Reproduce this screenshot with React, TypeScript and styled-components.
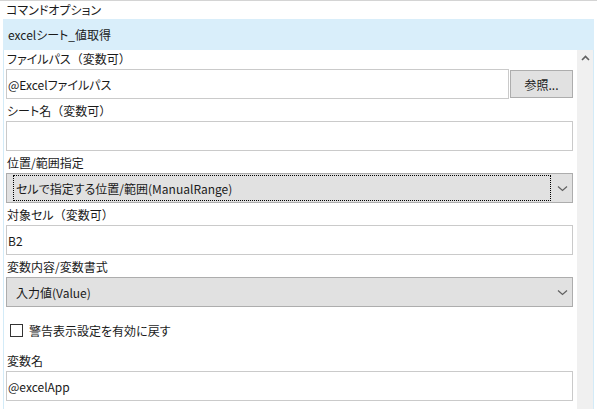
import styled, { createGlobalStyle } from "styled-components";

const GlobalStyle = createGlobalStyle`
  html, body {
    margin: 0;
    padding: 0;
    background: #ffffff;
  }
  body {
    font-family: "Noto Sans CJK JP", "Noto Sans", sans-serif;
    font-size: 12px;
    color: #1a1a1a;
    font-feature-settings: "palt";
  }
`;

const Window = styled.div`
  width: 597px;
  height: 409px;
  overflow: hidden;
  border-top: 1px solid #d4d4d4;
  box-sizing: border-box;
  display: flex;
  flex-direction: column;
`;

const Caption = styled.div`
  height: 18px;
  line-height: 18px;
  padding-left: 6px;
`;

const Panel = styled.div`
  margin-left: 3px;
  width: 591px;
  flex: 1;
  display: flex;
  flex-direction: column;
  min-height: 0;
`;

const Header = styled.div`
  height: 31px;
  line-height: 31px;
  background: #d9eefa;
  padding-left: 5px;
`;

const Body = styled.div`
  flex: 1;
  display: flex;
  border-left: 1px solid #d3ebf8;
  border-right: 1px solid #d3ebf8;
  min-height: 0;
`;

const Content = styled.div`
  flex: 1;
  padding: 0 4px 0 2px;
  display: flex;
  flex-direction: column;
`;

const Scrollbar = styled.div`
  width: 16px;
  background: #f0f0f0;
  display: flex;
  justify-content: center;
  padding-top: 5px;
  box-sizing: border-box;
`;

const Field = styled.div`
  display: flex;
  flex-direction: column;
`;

const Label = styled.label<{ $height: number }>`
  height: ${(p) => p.$height}px;
  line-height: 20px;
  display: flex;
  align-items: flex-end;
  padding-left: 1px;
  white-space: nowrap;
`;

const Paren = styled.span`
  font-feature-settings: normal;
`;

const Row = styled.div`
  display: flex;
  align-items: center;
  gap: 1px;
`;

const TextBox = styled.div`
  flex: 1 0 auto;
  height: 30px;
  box-sizing: border-box;
  border: 1px solid #cacaca;
  background: #ffffff;
  padding-left: 1px;
  display: flex;
  align-items: center;
  white-space: nowrap;
`;

const Button = styled.div`
  width: 63px;
  height: 28px;
  box-sizing: border-box;
  border: 1px solid #adadad;
  background: #e1e1e1;
  display: flex;
  align-items: center;
  justify-content: center;
`;

const Select = styled.div`
  height: 30px;
  box-sizing: border-box;
  border: 1px solid #adadad;
  background: #e1e1e1;
  display: flex;
  align-items: center;
  padding: 0 4px 0 6px;
`;

const SelectText = styled.div<{ $focused?: boolean }>`
  flex: 1;
  height: 26px;
  box-sizing: border-box;
  border: 1px dotted ${(p) => (p.$focused ? "#000000" : "transparent")};
  display: flex;
  align-items: center;
  padding-left: 2px;
  margin-right: 6px;
  white-space: nowrap;
`;

const CheckRow = styled.div`
  height: 46px;
  display: flex;
  align-items: center;
  gap: 6px;
  padding-left: 4px;
`;

const CheckBox = styled.div`
  width: 13px;
  height: 13px;
  box-sizing: border-box;
  border: 1px solid #333333;
  background: #ffffff;
`;

const Chevron = () => (
  <svg width="11" height="7" viewBox="0 0 11 7">
    <path d="M1 1.5 L5.5 5.5 L10 1.5" fill="none" stroke="#606060" strokeWidth="1.2" />
  </svg>
);

const UpArrow = () => (
  <svg width="9" height="6" viewBox="0 0 9 6">
    <path d="M1 5 L4.5 1.5 L8 5" fill="none" stroke="#606060" strokeWidth="1.6" />
  </svg>
);

function App() {
  return (
    <>
      <GlobalStyle />
      <Window>
        <Caption>コマンドオプション</Caption>
        <Panel>
          <Header>excelシート_値取得</Header>
          <Body>
            <Content>
              <Field>
                <Label $height={19}>
                  ファイルパス<Paren>（</Paren>変数可<Paren>）</Paren>
                </Label>
                <Row>
                  <TextBox>@Excelファイルパス</TextBox>
                  <Button>参照...</Button>
                </Row>
              </Field>
              <Field>
                <Label $height={22}>
                  シート名<Paren>（</Paren>変数可<Paren>）</Paren>
                </Label>
                <TextBox />
              </Field>
              <Field>
                <Label $height={22}>位置/範囲指定</Label>
                <Select>
                  <SelectText $focused>セルで指定する位置/範囲(ManualRange)</SelectText>
                  <Chevron />
                </Select>
              </Field>
              <Field>
                <Label $height={22}>
                  対象セル<Paren>（</Paren>変数可<Paren>）</Paren>
                </Label>
                <TextBox>B2</TextBox>
              </Field>
              <Field>
                <Label $height={22}>変数内容/変数書式</Label>
                <Select>
                  <SelectText>入力値(Value)</SelectText>
                  <Chevron />
                </Select>
              </Field>
              <CheckRow>
                <CheckBox />
                <span>警告表示設定を有効に戻す</span>
              </CheckRow>
              <Field>
                <Label $height={18}>変数名</Label>
                <TextBox>@excelApp</TextBox>
              </Field>
            </Content>
            <Scrollbar>
              <UpArrow />
            </Scrollbar>
          </Body>
        </Panel>
      </Window>
    </>
  );
}

export default App;
